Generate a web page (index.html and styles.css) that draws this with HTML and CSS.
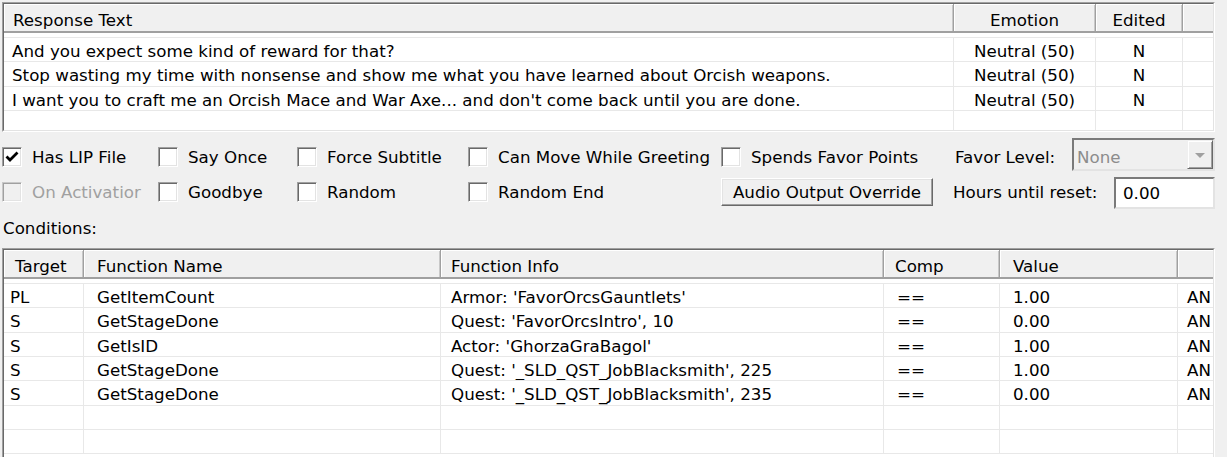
FILE: index.html
```html
<!DOCTYPE html>
<html>
	<head>
		<meta charset="UTF-8">
		<title>Response</title>
		<link rel="stylesheet" href="styles.css">
	</head>
	<body>
		<div class="list top">
			<div class="inner">
				<div class="lhead">
					<div class="hc w-text">Response Text</div>
					<div class="hc w-emo mid">Emotion</div>
					<div class="hc w-ed mid">Edited</div>
					<div class="hc w-fill"></div>
				</div>
				<div class="lbody">
					<div class="row">
						<div class="c w-text">And you expect some kind of reward for that?</div>
						<div class="c w-emo mid">Neutral (50)</div>
						<div class="c w-ed mid">N</div>
						<div class="c w-fill"></div>
					</div>
					<div class="row">
						<div class="c w-text">Stop wasting my time with nonsense and show me what you have learned about Orcish weapons.</div>
						<div class="c w-emo mid">Neutral (50)</div>
						<div class="c w-ed mid">N</div>
						<div class="c w-fill"></div>
					</div>
					<div class="row">
						<div class="c w-text">I want you to craft me an Orcish Mace and War Axe... and don't come back until you are done.</div>
						<div class="c w-emo mid">Neutral (50)</div>
						<div class="c w-ed mid">N</div>
						<div class="c w-fill"></div>
					</div>
					<div class="row">
						<div class="c w-text"></div>
						<div class="c w-emo"></div>
						<div class="c w-ed"></div>
						<div class="c w-fill"></div>
					</div>
				</div>
			</div>
		</div>

		<div class="opts">
			<label class="chk"><span class="box"><svg width="16" height="16" viewBox="0 0 16 16"><polyline points="2.5,7.5 6,11 13.5,3.5" fill="none" stroke="#000" stroke-width="2.8"/></svg></span>Has LIP File</label>
			<label class="chk"><span class="box"></span>Say Once</label>
			<label class="chk"><span class="box"></span>Force Subtitle</label>
			<label class="chk"><span class="box"></span>Can Move While Greeting</label>
			<label class="chk"><span class="box"></span>Spends Favor Points</label>
			<div class="pair">
				<span class="plabel fav">Favor Level:</span>
				<div class="combo"><span class="cval">None</span><span class="drop"><i class="tri"></i></span></div>
			</div>

			<label class="chk off"><span class="box"></span>On Activatior</label>
			<label class="chk"><span class="box"></span>Goodbye</label>
			<label class="chk"><span class="box"></span>Random</label>
			<label class="chk"><span class="box"></span>Random End</label>
			<button class="btn">Audio Output Override</button>
			<div class="pair">
				<span class="plabel">Hours until reset:</span>
				<input class="field" type="text" value="0.00">
			</div>
		</div>

		<div class="cond">Conditions:</div>

		<div class="list bottom">
			<div class="inner">
				<div class="lhead">
					<div class="hc w-tg">Target</div>
					<div class="hc w-fn">Function Name</div>
					<div class="hc w-fi">Function Info</div>
					<div class="hc w-cp">Comp</div>
					<div class="hc w-val">Value</div>
					<div class="hc w-last"></div>
				</div>
				<div class="lbody">
					<div class="row">
						<div class="c w-tg">PL</div>
						<div class="c w-fn">GetItemCount</div>
						<div class="c w-fi">Armor: 'FavorOrcsGauntlets'</div>
						<div class="c w-cp">==</div>
						<div class="c w-val">1.00</div>
						<div class="c w-last">AN</div>
					</div>
					<div class="row">
						<div class="c w-tg">S</div>
						<div class="c w-fn">GetStageDone</div>
						<div class="c w-fi">Quest: 'FavorOrcsIntro', 10</div>
						<div class="c w-cp">==</div>
						<div class="c w-val">0.00</div>
						<div class="c w-last">AN</div>
					</div>
					<div class="row">
						<div class="c w-tg">S</div>
						<div class="c w-fn">GetIsID</div>
						<div class="c w-fi">Actor: 'GhorzaGraBagol'</div>
						<div class="c w-cp">==</div>
						<div class="c w-val">1.00</div>
						<div class="c w-last">AN</div>
					</div>
					<div class="row">
						<div class="c w-tg">S</div>
						<div class="c w-fn">GetStageDone</div>
						<div class="c w-fi">Quest: '_SLD_QST_JobBlacksmith', 225</div>
						<div class="c w-cp">==</div>
						<div class="c w-val">1.00</div>
						<div class="c w-last">AN</div>
					</div>
					<div class="row">
						<div class="c w-tg">S</div>
						<div class="c w-fn">GetStageDone</div>
						<div class="c w-fi">Quest: '_SLD_QST_JobBlacksmith', 235</div>
						<div class="c w-cp">==</div>
						<div class="c w-val">0.00</div>
						<div class="c w-last">AN</div>
					</div>
					<div class="row">
						<div class="c w-tg"></div><div class="c w-fn"></div><div class="c w-fi"></div><div class="c w-cp"></div><div class="c w-val"></div><div class="c w-last"></div>
					</div>
					<div class="row">
						<div class="c w-tg"></div><div class="c w-fn"></div><div class="c w-fi"></div><div class="c w-cp"></div><div class="c w-val"></div><div class="c w-last"></div>
					</div>
				</div>
			</div>
		</div>
	</body>
</html>
```

FILE: styles.css
```css
html, body{
	margin: 0;
	height: 100%;
}
body{
	padding: 2px 12px 0 2px;
	box-sizing: border-box;
	background: #F0F0F0;
	font-family: "DejaVu Sans", sans-serif;
	font-size: 16.7px;
	color: #000;
	overflow: hidden;
}

/* sunken list frame */
.list{
	border: 1px solid;
	border-color: #A0A0A0 #FFF #FFF #A0A0A0;
}
.list .inner{
	border: 1px solid;
	border-color: #696969 #E3E3E3 #E3E3E3 #696969;
	background: #FFF;
	overflow: hidden;
}
.top .inner{
	height: 126px;
}
.bottom .inner{
	height: 212px;
}
.lhead{
	display: flex;
	background: #F0F0F0;
	width: max-content;
}
.hc{
	flex: none;
	height: 29px;
	box-sizing: border-box;
	padding: 6px 0 0 11px;
	line-height: 20px;
	border-right: 1px solid #A0A0A0;
	border-bottom: 2px solid #A0A0A0;
	box-shadow: inset 1px 1px 0 #FFF, inset -1px 0 0 #C8C8C8;
	white-space: nowrap;
}
.hc:last-child{
	border-right: none;
	box-shadow: inset 1px 1px 0 #FFF;
}
.lbody{
	margin-top: 4px;
	border-top: 1px solid #E8E8E8;
	width: max-content;
}
.row{
	display: flex;
	height: 24.33px;
	box-sizing: border-box;
	border-bottom: 1px solid #E8E8E8;
}
.c{
	flex: none;
	box-sizing: border-box;
	padding: 2px 0 0 12px;
	line-height: 22px;
	white-space: nowrap;
	overflow: hidden;
	border-right: 1px solid #E8E8E8;
}
.c:last-child{
	border-right: none;
}
.mid{
	text-align: center;
	padding-left: 0;
}

/* response columns */
.w-text{ width: 950px; }
.w-emo{ width: 142px; }
.w-ed{ width: 87px; }
.w-fill{ width: 30px; }
.hc.w-text{ padding-left: 9px; }
.c.w-text{ padding-left: 8px; }
.hc.mid, .c.mid{ padding-left: 0; }

/* condition columns */
.w-tg{ width: 80px; }
.w-fn{ width: 357px; }
.w-fi{ width: 443px; }
.w-cp{ width: 116px; }
.w-val{ width: 178px; }
.w-last{ width: 40px; }
.c.w-tg{ padding-left: 6px; }
.hc.w-fn, .hc.w-val{ padding-left: 13px; }
.c.w-fn{ padding-left: 13px; }
.hc.w-fi{ padding-left: 10px; }
.c.w-fi{ padding-left: 10px; }
.c.w-cp, .c.w-val{ padding-left: 13px; }
.c.w-last{ padding-left: 9px; }

/* options */
.opts{
	display: grid;
	grid-template-columns: 156px 139px 171px 253px 231px 1fr;
	grid-template-rows: 38px 29px;
	row-gap: 1px;
	align-items: center;
	margin-top: 6px;
}
.chk{
	display: flex;
	align-items: center;
	gap: 10px;
	line-height: 20px;
	white-space: nowrap;
}
.box{
	flex: none;
	width: 20px;
	height: 20px;
	box-sizing: border-box;
	border: 1px solid;
	border-color: #A0A0A0 #FFF #FFF #A0A0A0;
	background: #FFF;
	box-shadow: inset 1px 1px 0 #696969, inset -1px -1px 0 #E3E3E3;
	display: flex;
	align-items: center;
	justify-content: center;
}
.chk.off{
	color: #A0A0A0;
}
.chk.off .box{
	background: #F0F0F0;
	box-shadow: inset 1px 1px 0 #A0A0A0, inset -1px -1px 0 #E3E3E3;
	border-color: #C8C8C8 #FFF #FFF #C8C8C8;
}
.pair{
	display: flex;
	align-items: center;
	justify-content: space-between;
	align-self: stretch;
}
.plabel{
	padding-left: 1px;
	white-space: nowrap;
}
.plabel.fav{
	padding-left: 3px;
}
.combo{
	align-self: flex-start;
	width: 143px;
	height: 33px;
	box-sizing: border-box;
	border: 2px solid;
	border-color: #7A7A7A #E3E3E3 #E3E3E3 #7A7A7A;
	background: #F0F0F0;
	display: flex;
}
.cval{
	padding: 7px 0 0 3px;
	color: #8C8C8C;
	line-height: 20px;
}
.drop{
	margin-left: auto;
	width: 26px;
	box-sizing: border-box;
	border: 1px solid;
	border-color: #F0F0F0 #696969 #696969 #F0F0F0;
	box-shadow: inset 1px 1px 0 #FFF, inset -1px -1px 0 #A0A0A0;
	display: flex;
	align-items: center;
	justify-content: center;
}
.tri{
	width: 0;
	height: 0;
	border-left: 5px solid transparent;
	border-right: 5px solid transparent;
	border-top: 5px solid #A0A0A0;
	margin-top: 2px;
}
.btn{
	width: 212px;
	height: 28px;
	padding: 0;
	font: inherit;
	color: #000;
	background: #F0F0F0;
	border: 1px solid;
	border-color: #FFF #696969 #696969 #FFF;
	box-shadow: inset -1px -1px 0 #A0A0A0, inset 1px 1px 0 #E3E3E3;
	line-height: 24px;
}
.field{
	align-self: flex-start;
	width: 101px;
	height: 32px;
	box-sizing: border-box;
	margin: 0;
	padding: 0 0 0 7px;
	font: inherit;
	color: #000;
	background: #FFF;
	border: 2px solid;
	border-color: #7A7A7A #E3E3E3 #E3E3E3 #7A7A7A;
	outline: none;
}
.cond{
	margin-top: 12px;
	line-height: 20px;
	padding-left: 1px;
}
.bottom{
	margin-top: 10px;
}
```
